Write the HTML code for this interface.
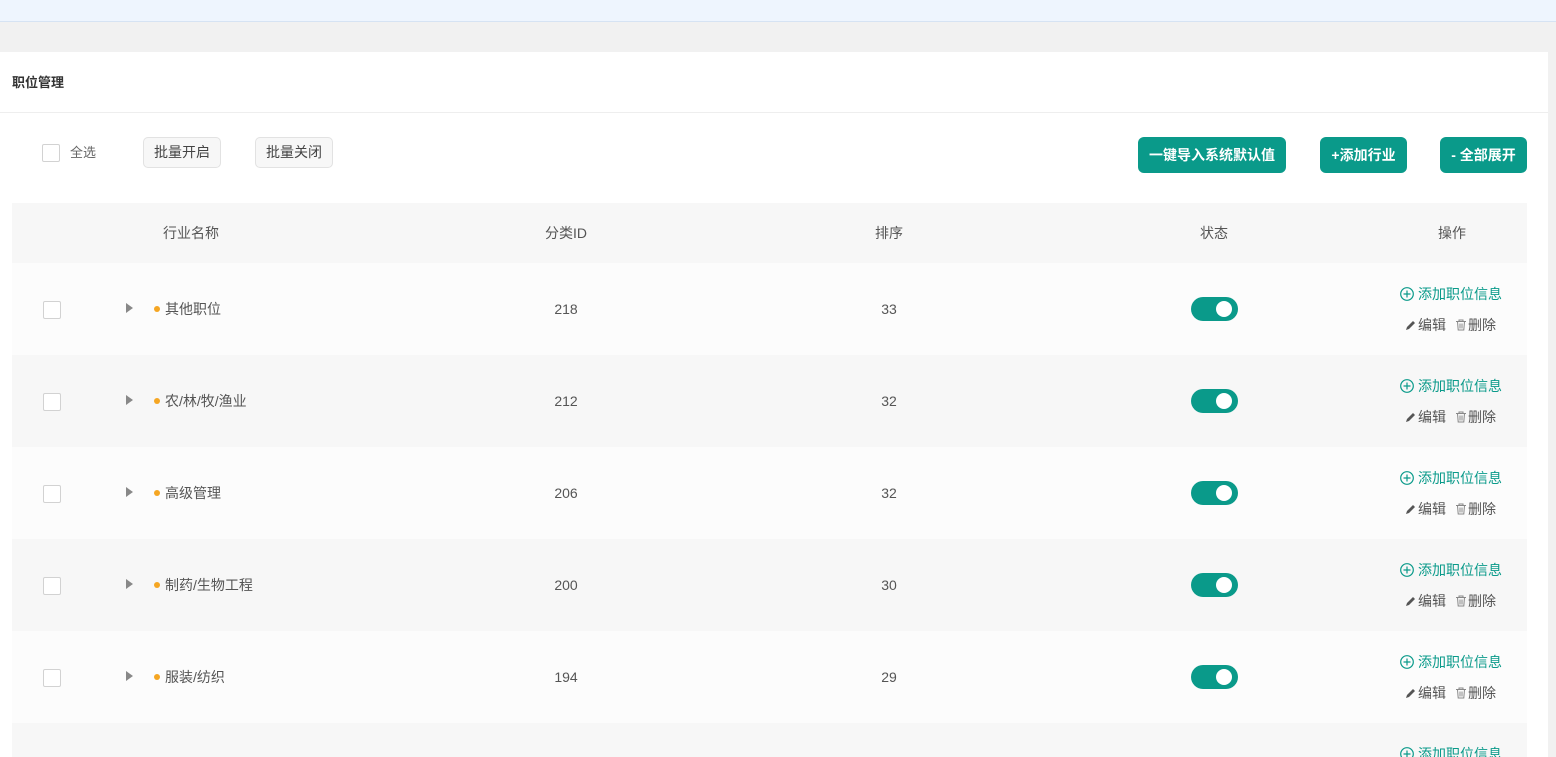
<!DOCTYPE html>
<html><head><meta charset="utf-8"><style>
*{margin:0;padding:0;box-sizing:border-box}
html,body{width:1556px;height:757px;overflow:hidden}
body{background:#f1f1f1;font-family:"Liberation Sans","Noto Sans CJK SC",sans-serif;font-size:14px;line-height:20px;color:#555;position:relative}
.top{position:absolute;left:0;top:0;width:1556px;height:22px;background:#eef5fe;border-bottom:1px solid #d6e3f3}
.panel{position:absolute;left:0;top:52px;width:1548px;height:705px;background:#fff;overflow:hidden}
.title{position:absolute;left:12px;top:21px;font-size:13px;font-weight:bold;color:#333}
.hr{position:absolute;left:0;top:60px;width:100%;height:1px;background:#eee}
.cb{position:absolute;width:18px;height:18px;border:1px solid #d2d2d2;background:#fff;border-radius:2px}
.gbtn{position:absolute;top:85px;height:31px;line-height:29px;border:1px solid #e2e2e2;background:#f7f7f7;border-radius:5px;padding:0 10px;color:#444;font-size:14px}
.tbtn{position:absolute;top:85px;height:36px;line-height:36px;background:#0a9a8a;color:#fff;border-radius:6px;font-weight:bold;font-size:14px;text-align:center}
.thead{position:absolute;left:12px;top:151px;width:1515px;height:60px;background:#f7f7f7}
.c{position:absolute;transform:translateX(-50%);white-space:nowrap}
.row{position:absolute;left:12px;width:1515px;height:92px}
.tri{position:absolute;left:114px;width:0;height:0;border-left:7px solid #888;border-top:5px solid transparent;border-bottom:5px solid transparent}
.dot{position:absolute;left:142px;width:6px;height:6px;border-radius:50%;background:#f5a623}
.sw{position:absolute;left:1179px;width:47px;height:24px;border-radius:12px;background:#0a9a8a}
.sw::after{content:"";position:absolute;right:6px;top:4px;width:16px;height:16px;border-radius:50%;background:#fff}
.add{position:absolute;left:1388px;color:#0a9a8a;font-size:14px;white-space:nowrap}
.add svg{vertical-align:-2px;margin-right:4px}
.ed{position:absolute;left:1393px;font-size:14px;color:#555;white-space:nowrap}
.ed svg{vertical-align:-1px;margin-right:1px}
.ed .d{margin-left:9px}
.sb{position:absolute;left:1548px;top:52px;width:8px;height:705px;background:#f1f1f1}
</style></head><body>
<div class="top"></div>
<div class="panel">
<div class="title">职位管理</div>
<div class="hr"></div>
<div class="cb" style="left:42px;top:92px"></div>
<div style="position:absolute;left:70px;top:91px;color:#666;font-size:13px">全选</div>
<div class="gbtn" style="left:143px">批量开启</div>
<div class="gbtn" style="left:255px">批量关闭</div>
<div class="tbtn" style="left:1138px;width:148px">一键导入系统默认值</div>
<div class="tbtn" style="left:1320px;width:87px">+添加行业</div>
<div class="tbtn" style="left:1440px;width:87px">- 全部展开</div>
<div class="thead">
<div class="c" style="left:179px;top:20px">行业名称</div>
<div class="c" style="left:554px;top:20px">分类ID</div>
<div class="c" style="left:877px;top:20px">排序</div>
<div class="c" style="left:1202px;top:20px">状态</div>
<div class="c" style="left:1440px;top:20px">操作</div>
</div>
<div style="position:absolute;left:0;top:211px">
<div class="row" style="top:0;background:#fcfcfc"><div class="cb" style="left:31px;top:38px"></div><div class="tri" style="top:40px"></div><div class="dot" style="top:43px"></div><div style="position:absolute;left:153px;top:36px">其他职位</div><div class="c" style="left:554px;top:36px">218</div><div class="c" style="left:877px;top:36px">33</div><div class="sw" style="top:34px"></div><div class="add" style="top:21px"><svg width="14" height="14" viewBox="0 0 14 14"><circle cx="7" cy="7" r="6.3" fill="none" stroke="#0a9a8a" stroke-width="1.2"/><path d="M3.5 7h7M7 3.5v7" stroke="#0a9a8a" stroke-width="1.2"/></svg>添加职位信息</div><div class="ed" style="top:52px"><svg width="12" height="12" viewBox="0 0 12 12"><path d="M1 11l1-3 6-6 2 2-6 6z" fill="#555"/></svg>编辑<span class="d"><svg width="12" height="12" viewBox="0 0 12 12"><path d="M1 2.5h10M4 2.5V1h4v1.5M2.5 2.5l.7 8.5h5.6l.7-8.5M5 4.5v5M7 4.5v5" fill="none" stroke="#888" stroke-width="1"/></svg>删除</span></div></div>
<div class="row" style="top:92px;background:#f7f7f7"><div class="cb" style="left:31px;top:38px"></div><div class="tri" style="top:40px"></div><div class="dot" style="top:43px"></div><div style="position:absolute;left:153px;top:36px">农/林/牧/渔业</div><div class="c" style="left:554px;top:36px">212</div><div class="c" style="left:877px;top:36px">32</div><div class="sw" style="top:34px"></div><div class="add" style="top:21px"><svg width="14" height="14" viewBox="0 0 14 14"><circle cx="7" cy="7" r="6.3" fill="none" stroke="#0a9a8a" stroke-width="1.2"/><path d="M3.5 7h7M7 3.5v7" stroke="#0a9a8a" stroke-width="1.2"/></svg>添加职位信息</div><div class="ed" style="top:52px"><svg width="12" height="12" viewBox="0 0 12 12"><path d="M1 11l1-3 6-6 2 2-6 6z" fill="#555"/></svg>编辑<span class="d"><svg width="12" height="12" viewBox="0 0 12 12"><path d="M1 2.5h10M4 2.5V1h4v1.5M2.5 2.5l.7 8.5h5.6l.7-8.5M5 4.5v5M7 4.5v5" fill="none" stroke="#888" stroke-width="1"/></svg>删除</span></div></div>
<div class="row" style="top:184px;background:#fcfcfc"><div class="cb" style="left:31px;top:38px"></div><div class="tri" style="top:40px"></div><div class="dot" style="top:43px"></div><div style="position:absolute;left:153px;top:36px">高级管理</div><div class="c" style="left:554px;top:36px">206</div><div class="c" style="left:877px;top:36px">32</div><div class="sw" style="top:34px"></div><div class="add" style="top:21px"><svg width="14" height="14" viewBox="0 0 14 14"><circle cx="7" cy="7" r="6.3" fill="none" stroke="#0a9a8a" stroke-width="1.2"/><path d="M3.5 7h7M7 3.5v7" stroke="#0a9a8a" stroke-width="1.2"/></svg>添加职位信息</div><div class="ed" style="top:52px"><svg width="12" height="12" viewBox="0 0 12 12"><path d="M1 11l1-3 6-6 2 2-6 6z" fill="#555"/></svg>编辑<span class="d"><svg width="12" height="12" viewBox="0 0 12 12"><path d="M1 2.5h10M4 2.5V1h4v1.5M2.5 2.5l.7 8.5h5.6l.7-8.5M5 4.5v5M7 4.5v5" fill="none" stroke="#888" stroke-width="1"/></svg>删除</span></div></div>
<div class="row" style="top:276px;background:#f7f7f7"><div class="cb" style="left:31px;top:38px"></div><div class="tri" style="top:40px"></div><div class="dot" style="top:43px"></div><div style="position:absolute;left:153px;top:36px">制药/生物工程</div><div class="c" style="left:554px;top:36px">200</div><div class="c" style="left:877px;top:36px">30</div><div class="sw" style="top:34px"></div><div class="add" style="top:21px"><svg width="14" height="14" viewBox="0 0 14 14"><circle cx="7" cy="7" r="6.3" fill="none" stroke="#0a9a8a" stroke-width="1.2"/><path d="M3.5 7h7M7 3.5v7" stroke="#0a9a8a" stroke-width="1.2"/></svg>添加职位信息</div><div class="ed" style="top:52px"><svg width="12" height="12" viewBox="0 0 12 12"><path d="M1 11l1-3 6-6 2 2-6 6z" fill="#555"/></svg>编辑<span class="d"><svg width="12" height="12" viewBox="0 0 12 12"><path d="M1 2.5h10M4 2.5V1h4v1.5M2.5 2.5l.7 8.5h5.6l.7-8.5M5 4.5v5M7 4.5v5" fill="none" stroke="#888" stroke-width="1"/></svg>删除</span></div></div>
<div class="row" style="top:368px;background:#fcfcfc"><div class="cb" style="left:31px;top:38px"></div><div class="tri" style="top:40px"></div><div class="dot" style="top:43px"></div><div style="position:absolute;left:153px;top:36px">服装/纺织</div><div class="c" style="left:554px;top:36px">194</div><div class="c" style="left:877px;top:36px">29</div><div class="sw" style="top:34px"></div><div class="add" style="top:21px"><svg width="14" height="14" viewBox="0 0 14 14"><circle cx="7" cy="7" r="6.3" fill="none" stroke="#0a9a8a" stroke-width="1.2"/><path d="M3.5 7h7M7 3.5v7" stroke="#0a9a8a" stroke-width="1.2"/></svg>添加职位信息</div><div class="ed" style="top:52px"><svg width="12" height="12" viewBox="0 0 12 12"><path d="M1 11l1-3 6-6 2 2-6 6z" fill="#555"/></svg>编辑<span class="d"><svg width="12" height="12" viewBox="0 0 12 12"><path d="M1 2.5h10M4 2.5V1h4v1.5M2.5 2.5l.7 8.5h5.6l.7-8.5M5 4.5v5M7 4.5v5" fill="none" stroke="#888" stroke-width="1"/></svg>删除</span></div></div>
<div class="row" style="top:460px;background:#f7f7f7"><div class="add" style="top:21px"><svg width="14" height="14" viewBox="0 0 14 14"><circle cx="7" cy="7" r="6.3" fill="none" stroke="#0a9a8a" stroke-width="1.2"/><path d="M3.5 7h7M7 3.5v7" stroke="#0a9a8a" stroke-width="1.2"/></svg>添加职位信息</div></div>
</div>
</div>
<div class="sb"></div>
</body></html>
